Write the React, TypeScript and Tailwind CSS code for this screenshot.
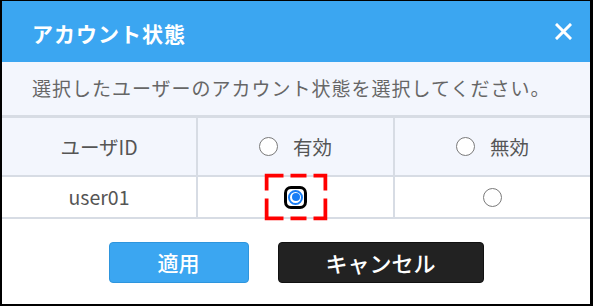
import React from "react";

const font = { fontFamily: '"Noto Sans CJK JP", "Noto Sans", sans-serif' };

function Radio() {
  return <span className="block w-[19px] h-[19px] rounded-full border-[1.5px] border-[#7a7a7a] bg-white" />;
}

function SelectedRadio() {
  return (
    <span className="relative flex items-center justify-center">
      <span className="flex items-center justify-center w-[23px] h-[23px] rounded-[7px] border-[3px] border-black bg-white">
        <span className="flex items-center justify-center w-[15px] h-[15px] rounded-full border-2 border-[#1a7ef5] bg-white">
          <span className="block w-[8px] h-[8px] rounded-full bg-[#1a7ef5]" />
        </span>
      </span>
      <svg
        className="absolute left-1/2 top-1/2 -translate-x-1/2 -translate-y-1/2"
        width="63"
        height="47"
        viewBox="0 0 63 47"
      >
        <path
          d="M0 2H19M26 2H42M49 2H63M0 45H19M26 45H42M49 45H63M2 0V17M2 25V47M61 0V17M61 25V47"
          stroke="#ff0000"
          strokeWidth="4"
          fill="none"
        />
      </svg>
    </span>
  );
}

export default function App() {
  return (
    <div className="w-[593px] h-[306px] bg-black pt-[1px] pl-[2px] pr-[3px] pb-[2px]" style={font}>
      <div className="w-full h-full bg-white flex flex-col">
        <div className="h-[61px] bg-[#3ba6f1] flex items-center justify-between pl-[30px] pr-[18px] pt-[4px]">
          <span className="text-white text-[21px] font-bold tracking-[1px]">アカウント状態</span>
          <svg width="17" height="17" viewBox="0 0 17 17" className="mb-[5px]">
            <path d="M2 2L15 15M15 2L2 15" stroke="white" strokeWidth="3" strokeLinecap="square" />
          </svg>
        </div>
        <div className="h-[53px] bg-[#f3f6fd] flex items-center pl-[30px] text-[19px] tracking-[1px] text-[#666]">
          選択したユーザーのアカウント状態を選択してください。
        </div>
        <div className="border-t-[3px] border-[#d7dce4]">
          <div className="flex h-[59px] bg-[#f3f6fd] border-b-2 border-[#d7dce4] text-[19.5px] text-[#555]">
            <div className="w-[196px] border-r-2 border-[#d7dce4] flex items-center justify-center">ユーザID</div>
            <div className="w-[197px] border-r-2 border-[#d7dce4] flex items-center justify-center gap-[15px]">
              <Radio />
              <span>有効</span>
            </div>
            <div className="flex-1 flex items-center justify-center gap-[15px]">
              <Radio />
              <span>無効</span>
            </div>
          </div>
          <div className="flex h-[42px] border-b-2 border-[#d7dce4] text-[19.5px] text-[#555]">
            <div className="w-[196px] border-r-2 border-[#d7dce4] flex items-center justify-center">user01</div>
            <div className="w-[197px] border-r-2 border-[#d7dce4] flex items-center justify-center">
              <SelectedRadio />
            </div>
            <div className="flex-1 flex items-center justify-center">
              <Radio />
            </div>
          </div>
        </div>
        <div className="flex-1 flex items-start justify-center gap-[29px] pt-[23px]">
          <button className="w-[140px] h-[41px] rounded-[4px] bg-[#3ba6f1] border border-[#2e95dd] text-white text-[21px] font-medium flex items-center justify-center">
            適用
          </button>
          <button className="w-[206px] h-[41px] rounded-[4px] bg-[#222222] border border-[#111] text-white text-[22px] font-medium flex items-center justify-center">
            キャンセル
          </button>
        </div>
      </div>
    </div>
  );
}
